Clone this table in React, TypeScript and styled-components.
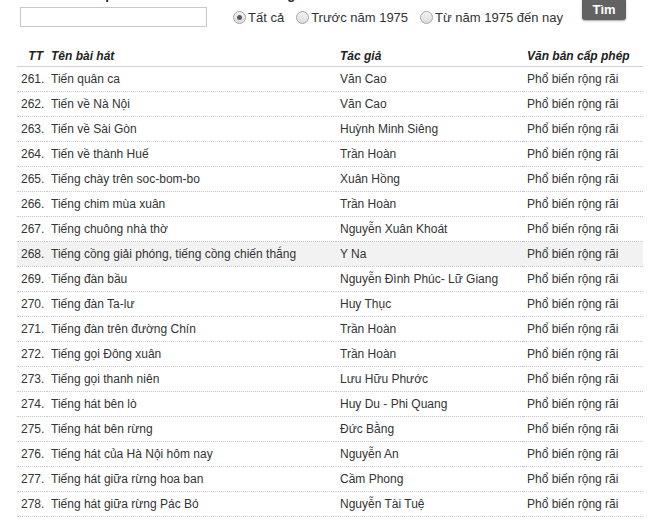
import React from "react";
import styled, { createGlobalStyle } from "styled-components";

const GlobalStyle = createGlobalStyle`
  html, body { margin: 0; padding: 0; background: #fff; }
  body { font-family: Arial, "Liberation Sans", sans-serif; color: #333; overflow: hidden; }
`;

const Page = styled.div`
  padding: 0 16px 0 17px;
  width: 659px;
  box-sizing: border-box;
`;

const SearchForm = styled.form`
  display: flex;
  align-items: flex-start;
  margin-top: -13px;
  padding-left: 3px;
`;

const Field = styled.div<{ $width?: number; $offset?: number }>`
  display: flex;
  flex-direction: column;
  ${(p) => (p.$width ? `width: ${p.$width}px;` : "")}
  ${(p) => (p.$offset ? `margin-left: ${p.$offset}px;` : "")}
`;

const FieldLabel = styled.label`
  font-size: 13px;
  font-weight: bold;
  line-height: 16px;
  color: #222;
  white-space: nowrap;
`;

const KeywordInput = styled.input`
  margin: 4px 0 0;
  height: 20px;
  width: 100%;
  box-sizing: border-box;
  border: 1px solid #c8c8c8;
  padding: 0 3px;
  font: 13px Arial, "Liberation Sans", sans-serif;
  color: #333;
  outline: none;
`;

const RadioRow = styled.div`
  display: flex;
  align-items: center;
  height: 20px;
  margin-top: 4px;
`;

const RadioOption = styled.label`
  display: flex;
  align-items: center;
  gap: 2px;
  margin-right: 12px;
  font-size: 13px;
  color: #333;
  white-space: nowrap;
  &:last-child { margin-right: 0; }
`;

const RadioInput = styled.input`
  appearance: none;
  -webkit-appearance: none;
  margin: 0;
  width: 13px;
  height: 13px;
  border-radius: 50%;
  border: 1px solid #a6a6a6;
  background: linear-gradient(#f4f4f4, #dcdcdc);
  box-sizing: border-box;
  display: grid;
  place-items: center;
  &:checked::after {
    content: "";
    width: 5px;
    height: 5px;
    border-radius: 50%;
    background: #5a5a5a;
  }
`;

const SearchButton = styled.button`
  margin: 11px 0 0 19px;
  width: 44px;
  height: 22px;
  padding: 0;
  border: none;
  border-radius: 3px;
  background: #626262;
  color: #fff;
  font: bold 13px Arial, "Liberation Sans", sans-serif;
  box-shadow: 0 1px 2px rgba(0, 0, 0, 0.35);
`;

const SongTable = styled.table`
  margin-top: 18px;
  width: 626px;
  border-collapse: collapse;
  table-layout: fixed;
  font-size: 12px;
`;

const HeadCell = styled.th<{ $right?: boolean }>`
  padding: 4px 4px 3px;
  line-height: 14px;
  font-weight: bold;
  font-style: italic;
  text-align: ${(p) => (p.$right ? "right" : "left")};
  color: #222;
  border-bottom: 1px solid #cfcfcf;
  white-space: nowrap;
`;

const Row = styled.tr<{ $active?: boolean }>`
  background: ${(p) => (p.$active ? "#f2f2f2" : "transparent")};
`;

const Cell = styled.td<{ $right?: boolean }>`
  padding: 5px 4px;
  line-height: 14px;
  text-align: ${(p) => (p.$right ? "right" : "left")};
  color: #333;
  border-bottom: 1px dotted #c8c8c8;
  white-space: nowrap;
  overflow: hidden;
`;

const songs: [number, string, string][] = [
  [261, "Tiến quân ca", "Văn Cao"],
  [262, "Tiến về Nà Nội", "Văn Cao"],
  [263, "Tiến về Sài Gòn", "Huỳnh Minh Siêng"],
  [264, "Tiến về thành Huế", "Trần Hoàn"],
  [265, "Tiếng chày trên soc-bom-bo", "Xuân Hồng"],
  [266, "Tiếng chim mùa xuân", "Trần Hoàn"],
  [267, "Tiếng chuông nhà thờ", "Nguyễn Xuân Khoát"],
  [268, "Tiếng cồng giải phóng, tiếng cồng chiến thắng", "Y Na"],
  [269, "Tiếng đàn bầu", "Nguyễn Đình Phúc- Lữ Giang"],
  [270, "Tiếng đàn Ta-lư", "Huy Thục"],
  [271, "Tiếng đàn trên đường Chín", "Trần Hoàn"],
  [272, "Tiếng gọi Đông xuân", "Trần Hoàn"],
  [273, "Tiếng gọi thanh niên", "Lưu Hữu Phước"],
  [274, "Tiếng hát bên lò", "Huy Du - Phi Quang"],
  [275, "Tiếng hát bên rừng", "Đức Bằng"],
  [276, "Tiếng hát của Hà Nội hôm nay", "Nguyễn An"],
  [277, "Tiếng hát giữa rừng hoa ban", "Cầm Phong"],
  [278, "Tiếng hát giữa rừng Pác Bó", "Nguyễn Tài Tuệ"],
  [279, "Tiếng hát người chiến sĩ", "Trần Hoàn"],
];

export default function App() {
  return (
    <>
      <GlobalStyle />
      <Page>
        <SearchForm onSubmit={(e) => e.preventDefault()}>
          <Field $width={187}>
            <FieldLabel htmlFor="kw">Từ khoá liên quan</FieldLabel>
            <KeywordInput id="kw" type="text" autoFocus />
          </Field>
          <Field $offset={26}>
            <FieldLabel>Năm sáng tác</FieldLabel>
            <RadioRow>
              <RadioOption>
                <RadioInput type="radio" name="period" defaultChecked />
                Tất cả
              </RadioOption>
              <RadioOption>
                <RadioInput type="radio" name="period" />
                Trước năm 1975
              </RadioOption>
              <RadioOption>
                <RadioInput type="radio" name="period" />
                Từ năm 1975 đến nay
              </RadioOption>
            </RadioRow>
          </Field>
          <SearchButton type="submit">Tìm</SearchButton>
        </SearchForm>
        <SongTable>
          <colgroup>
            <col style={{ width: 30 }} />
            <col style={{ width: 289 }} />
            <col style={{ width: 187 }} />
            <col style={{ width: 120 }} />
          </colgroup>
          <thead>
            <tr>
              <HeadCell $right>TT</HeadCell>
              <HeadCell>Tên bài hát</HeadCell>
              <HeadCell>Tác giả</HeadCell>
              <HeadCell>Văn bản cấp phép</HeadCell>
            </tr>
          </thead>
          <tbody>
            {songs.map(([n, title, author]) => (
              <Row key={n} $active={n === 268}>
                <Cell $right>{n}.</Cell>
                <Cell>{title}</Cell>
                <Cell>{author}</Cell>
                <Cell>Phổ biến rộng rãi</Cell>
              </Row>
            ))}
          </tbody>
        </SongTable>
      </Page>
    </>
  );
}
